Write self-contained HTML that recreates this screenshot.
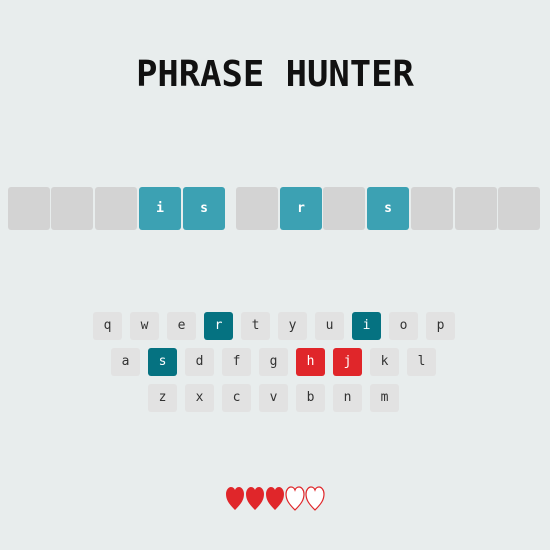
<!DOCTYPE html>
<html><head><style>
body{margin:0;width:550px;height:550px;background:#e8eded;font-family:"DejaVu Sans Mono","Liberation Mono",monospace;position:relative;overflow:hidden}
h1{position:absolute;top:52px;left:0;width:550px;text-align:center;margin:0;font-size:35.5px;font-weight:bold;color:#111;line-height:46px}
.b{position:absolute;top:187px;width:42px;height:43px;border-radius:3px;background:#d3d3d3;color:#fff;font-size:13px;font-weight:bold;text-align:center;line-height:43px}
.b.s{background:#3ca1b3}
.k{position:absolute;width:29px;height:28px;border-radius:3px;background:#e2e2e2;color:#333;font-size:13px;text-align:center;line-height:28px}
.k.c{background:#057281;color:#fff}
.k.w{background:#e0262a;color:#fff}
svg{position:absolute}
</style></head><body>
<h1>PHRASE HUNTER</h1>
<div class="b" style="left:8px"></div>
<div class="b" style="left:51px"></div>
<div class="b" style="left:95px"></div>
<div class="b s" style="left:139px">i</div>
<div class="b s" style="left:183px">s</div>
<div class="b" style="left:236px"></div>
<div class="b s" style="left:280px">r</div>
<div class="b" style="left:323px"></div>
<div class="b s" style="left:367px">s</div>
<div class="b" style="left:411px"></div>
<div class="b" style="left:455px"></div>
<div class="b" style="left:498px"></div>

<div class="k" style="left:93px;top:312px">q</div>
<div class="k" style="left:130px;top:312px">w</div>
<div class="k" style="left:167px;top:312px">e</div>
<div class="k c" style="left:204px;top:312px">r</div>
<div class="k" style="left:241px;top:312px">t</div>
<div class="k" style="left:278px;top:312px">y</div>
<div class="k" style="left:315px;top:312px">u</div>
<div class="k c" style="left:352px;top:312px">i</div>
<div class="k" style="left:389px;top:312px">o</div>
<div class="k" style="left:426px;top:312px">p</div>

<div class="k" style="left:111px;top:348px">a</div>
<div class="k c" style="left:148px;top:348px">s</div>
<div class="k" style="left:185px;top:348px">d</div>
<div class="k" style="left:222px;top:348px">f</div>
<div class="k" style="left:259px;top:348px">g</div>
<div class="k w" style="left:296px;top:348px">h</div>
<div class="k w" style="left:333px;top:348px">j</div>
<div class="k" style="left:370px;top:348px">k</div>
<div class="k" style="left:407px;top:348px">l</div>

<div class="k" style="left:148px;top:384px">z</div>
<div class="k" style="left:185px;top:384px">x</div>
<div class="k" style="left:222px;top:384px">c</div>
<div class="k" style="left:259px;top:384px">v</div>
<div class="k" style="left:296px;top:384px">b</div>
<div class="k" style="left:333px;top:384px">n</div>
<div class="k" style="left:370px;top:384px">m</div>

<svg style="left:224px;top:485px" width="102" height="27" viewBox="0 0 102 27">
<defs><path id="h" d="M10 25 C4 19 1 15 1 9 C1 5 3.5 2 6 2 C8 2 9.5 3.5 10 5 C10.5 3.5 12 2 14 2 C16.5 2 19 5 19 9 C19 15 16 19 10 25 Z"/></defs>
<use href="#h" x="1" fill="#e0262a"/>
<use href="#h" x="21" fill="#e0262a"/>
<use href="#h" x="41" fill="#e0262a"/>
<use href="#h" x="61" fill="#fff" stroke="#e0262a" stroke-width="1.2"/>
<use href="#h" x="81" fill="#fff" stroke="#e0262a" stroke-width="1.2"/>
</svg>
</body></html>
